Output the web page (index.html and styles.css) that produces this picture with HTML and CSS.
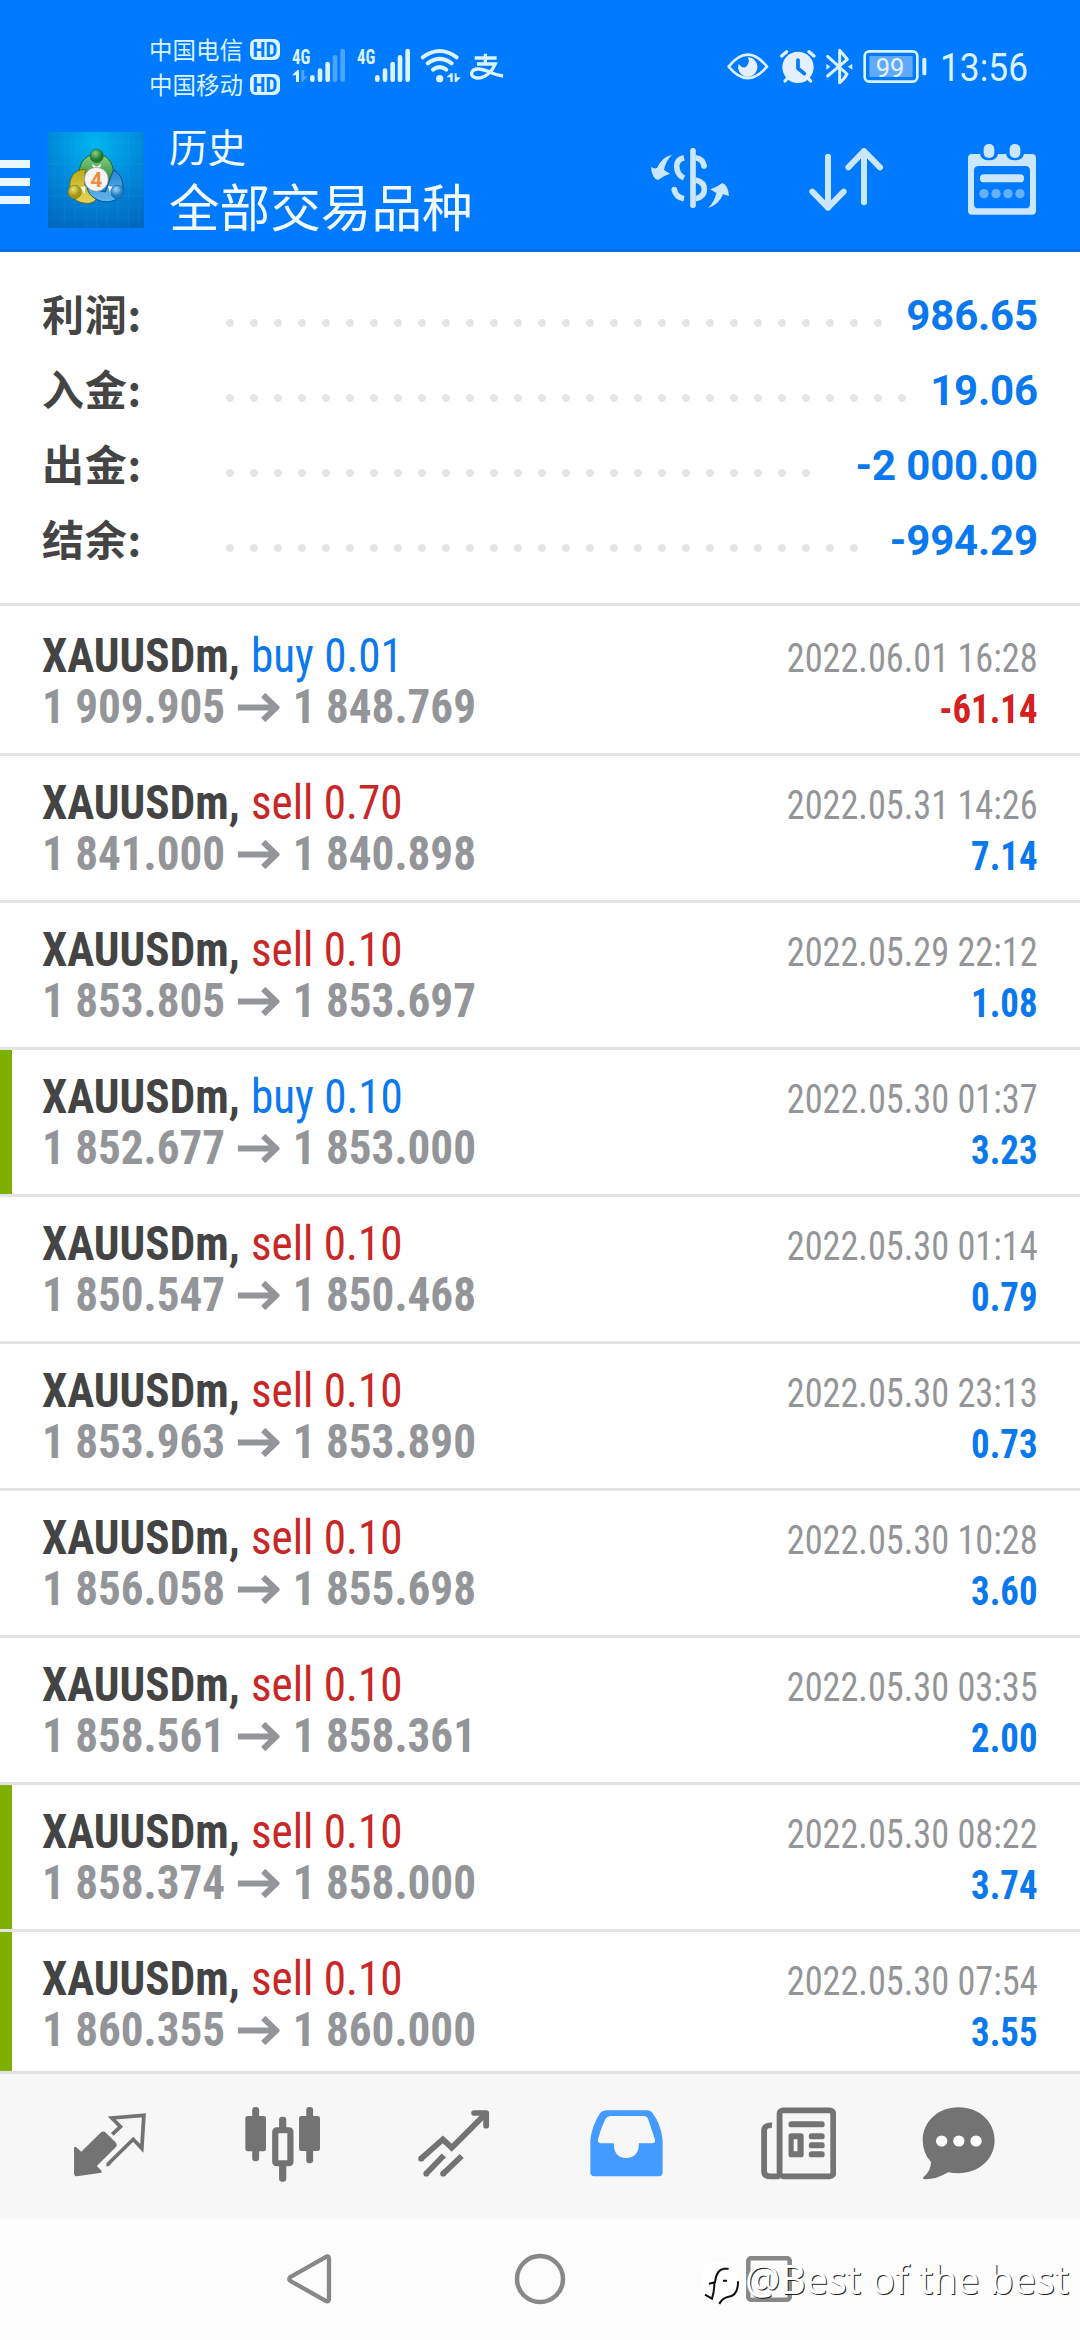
FILE: index.html
```
<!DOCTYPE html>
<html lang="zh-CN">
<head>
<meta charset="utf-8">
<title>历史</title>
<link rel="stylesheet" href="styles.css">
</head>
<body>
<header class="top">
  <div class="status">
    <div class="carriers">
      <div class="carrier">中国电信<span class="hd">HD</span></div>
      <div class="carrier">中国移动<span class="hd">HD</span></div>
    </div>
    <svg class="signals" viewBox="486 69 636 120" width="212" height="40">
      <g fill="#d9f3ff">
        <text x="486" y="131" class="net" textLength="55" lengthAdjust="spacingAndGlyphs">4G</text>
        <text x="681" y="131" class="net" textLength="55" lengthAdjust="spacingAndGlyphs">4G</text>
        <path d="M486 166 502 150H507V186H498V166Z"/>
        <path d="M514 150H523V169H533L517 186H514Z" opacity=".35"/>
      </g>
      <g stroke="#d9f3ff" stroke-width="14" stroke-linecap="round">
        <path d="M547 172V179M570 152V179M593 132V179"/>
        <path d="M615 112V179M638 93V179" opacity=".35"/>
        <path d="M742 172V179M765 152V179M788 132V179M810 112V179M833 93V179"/>
      </g>
      <g fill="none" stroke="#d9f3ff" stroke-width="12" stroke-linecap="round">
        <path d="M878 112Q929 74 980 112M893 130Q929 103 965 130M909 149Q929 134 949 149"/>
      </g>
      <circle cx="929" cy="176" r="11" fill="#d9f3ff"/>
      <path d="M949 172 963 160H968V186H961V172ZM974 160H980V172H993L979 186H974Z" fill="#d9f3ff"/>
      <path d="M1034 114H1100M1066 101V131M1041 132H1096C1088 152 1066 176 1040 174C1016 171 1022 147 1045 147C1070 147 1084 164 1119 168" fill="none" stroke="#d9f3ff" stroke-width="10"/>
    </svg>
    <svg class="indicators" viewBox="80 84 600 111" width="200" height="37">
      <path d="M85 140Q142 68 200 140Q142 209 85 140Z" fill="none" stroke="#dcf0ff" stroke-width="8" stroke-linejoin="round"/>
      <path d="M142 112A29 29 0 1 1 115 131Q128 149 139 139Q150 126 142 112Z" fill="#e4f0ff"/>
      <circle cx="293" cy="142" r="47" fill="#e4f0ff"/>
      <path d="M244 108 259 95M341 108 326 95M254 183 262 174M331 183 323 174" stroke="#e4f0ff" stroke-width="10" stroke-linecap="round"/>
      <path d="M293 120V145L312 161" fill="none" stroke="#007aff" stroke-width="11" stroke-linecap="round"/>
      <path d="M382 109 440 162Q430 180 418 188V91L441 118 382 168" fill="none" stroke="#d9f3ff" stroke-width="9" stroke-linejoin="round" stroke-linecap="round"/>
      <path d="M378 131 390 140 378 149ZM456 131 443 140 456 149Z" fill="#d9f3ff"/>
      <rect x="493" y="94" width="158" height="91" rx="14" fill="none" stroke="#d9f3ff" stroke-width="8"/>
      <rect x="507" y="108" width="130" height="63" rx="3" fill="#5fa9ff"/>
      <rect x="666" y="113" width="12" height="53" rx="5" fill="#d9f3ff"/>
      <text x="526" y="170" class="battery" textLength="86" lengthAdjust="spacingAndGlyphs" fill="#e4f3ff">99</text>
    </svg>
    <span class="clock">13:56</span>
  </div>
  <div class="appbar">
    <div class="menu"><i></i><i></i><i></i></div>
    <svg class="logo" viewBox="0 0 288 288" width="96" height="96">
      <defs>
        <radialGradient id="sky" cx=".5" cy=".12" r=".95"><stop offset="0" stop-color="#00b6ee"/><stop offset=".5" stop-color="#0089dc"/><stop offset="1" stop-color="#0067be"/></radialGradient>
        <linearGradient id="green" x2="0" y2="1"><stop offset="0" stop-color="#8fd08a"/><stop offset="1" stop-color="#1f8a2d"/></linearGradient>
        <linearGradient id="gold" x2="0" y2="1"><stop offset="0" stop-color="#b9ad1c"/><stop offset="1" stop-color="#e6d65a"/></linearGradient>
        <linearGradient id="blue" x2="0" y2="1"><stop offset="0" stop-color="#2a84cf"/><stop offset="1" stop-color="#62b8ee"/></linearGradient>
        <radialGradient id="gball" cx=".4" cy=".3"><stop offset="0" stop-color="#8ed084"/><stop offset="1" stop-color="#1d7a2a"/></radialGradient>
        <radialGradient id="yball" cx=".4" cy=".3"><stop offset="0" stop-color="#f0e478"/><stop offset="1" stop-color="#a39412"/></radialGradient>
        <radialGradient id="bball" cx=".4" cy=".3"><stop offset="0" stop-color="#9ad6f8"/><stop offset="1" stop-color="#1c78c0"/></radialGradient>
      </defs>
      <rect width="288" height="288" fill="url(#sky)"/>
      <path d="M18 0V288M50 0V288M82 0V288M114 0V288M146 0V288M178 0V288M210 0V288M242 0V288M274 0V288M0 32H288M0 64H288M0 96H288M0 128H288M0 160H288M0 192H288M0 224H288M0 256H288" stroke="#4fc0f5" stroke-opacity=".16" stroke-width="2"/>
      <path d="M94 120C94 88 118 66 146 66C176 66 196 92 197 124L176 152 112 126Z" fill="url(#green)" stroke="#176b2b" stroke-width="3"/>
      <path d="M112 112C76 112 62 142 66 168C66 196 88 214 118 214C132 214 144 206 146 198L110 160Z" fill="url(#gold)" stroke="#756c12" stroke-width="3"/>
      <path d="M196 114C220 124 230 156 222 182C212 208 176 216 150 204C134 196 120 186 118 168L172 180Z" fill="url(#blue)" stroke="#10508f" stroke-width="3"/>
      <path d="M132 96 146 104 160 96 152 118H140ZM98 166 112 162 110 186ZM180 162 194 164 188 190Z" fill="#f4faf2"/>
      <circle cx="146" cy="72" r="20" fill="url(#gball)" stroke="#2a6d32" stroke-width="2"/>
      <circle cx="80" cy="180" r="20" fill="url(#yball)" stroke="#857a18" stroke-width="2"/>
      <circle cx="208" cy="180" r="20" fill="url(#bball)" stroke="#1a5f9f" stroke-width="2"/>
      <circle cx="145" cy="142" r="36" fill="#f5f5f5" stroke="#888" stroke-width="2"/>
      <text x="145" y="165" class="four" text-anchor="middle">4</text>
    </svg>
    <div class="titles"><div class="title">历史</div><div class="subtitle">全部交易品种</div></div>
    <svg class="act-dollar" viewBox="93 84 234 180" width="78" height="60">
      <path d="M93 140Q103 148 111 144Q124 112 156 104Q137 123 132 150L150 161Q133 166 114 180Q95 174 93 140Z" fill="#cbe6ff"/>
      <path d="M327 228Q316 225 309 223Q297 254 264 264Q284 245 289 219L271 208Q288 203 307 189Q324 194 327 228Z" fill="#cbe6ff"/>
      <g fill="none" stroke="#cbe6ff" stroke-width="17">
        <path d="M219 92V256" stroke-linecap="round"/>
        <path d="M192 113Q170 118 170 139Q171 165 192 174M163 209Q167 231 192 236"/>
        <path d="M227 113Q250 117 252 139M227 180Q253 186 253 208Q253 231 227 236" />
      </g>
      <circle cx="163" cy="209" r="8.500" fill="#cbe6ff"/><circle cx="252" cy="138" r="8.500" fill="#cbe6ff"/>
    </svg>
    <svg class="act-sort" viewBox="567 84 222 189" width="74" height="63">
      <path d="M624 110V263M577 215 624 263 671 215M732 247V93M685 142 732 93 780 142" fill="none" stroke="#cbe6ff" stroke-width="18" stroke-linecap="round" stroke-linejoin="round"/>
    </svg>
    <svg class="act-cal" viewBox="1044 71 204 213" width="68" height="71">
      <path fill="#cbe6ff" fill-rule="evenodd" d="M1056 101H1080Q1084 120 1107 120Q1130 120 1134 101H1158Q1162 120 1185 120Q1208 120 1212 101H1236Q1248 101 1248 113V271Q1248 283 1236 283H1056Q1044 283 1044 271V113Q1044 101 1056 101ZM1076 137Q1062 137 1062 151V250Q1062 264 1076 264H1216Q1230 264 1230 250V151Q1230 137 1216 137Z"/>
      <rect x="1086" y="66" width="42" height="52" rx="20" fill="#007aff"/><rect x="1164" y="66" width="42" height="52" rx="20" fill="#007aff"/>
      <rect x="1091" y="71" width="32" height="42" rx="15" fill="#cbe6ff"/><rect x="1169" y="71" width="32" height="42" rx="15" fill="#cbe6ff"/>
      <rect x="1080" y="162" width="132" height="24" rx="11" fill="#cbe6ff"/>
      <g fill="#66b0ff"><circle cx="1092" cy="220" r="14"/><circle cx="1128" cy="220" r="14"/><circle cx="1164" cy="220" r="14"/><circle cx="1200" cy="220" r="14"/></g>
    </svg>
  </div>
</header>

<section class="summary">
  <div class="sum"><span class="label">利润:</span><span class="dots" style="width:672px"></span><b>986.65</b></div>
  <div class="sum"><span class="label">入金:</span><span class="dots" style="width:696px"></span><b>19.06</b></div>
  <div class="sum"><span class="label">出金:</span><span class="dots" style="width:600px"></span><b>-2 000.00</b></div>
  <div class="sum"><span class="label">结余:</span><span class="dots" style="width:648px"></span><b>-994.29</b></div>
</section>

<svg class="defs" width="0" height="0"><symbol id="arrow" viewBox="0 0 42 29" preserveAspectRatio="none"><path d="M0 14.500H38M25.500 2 38.500 14.500 25.500 27" fill="none" stroke="#939598" stroke-width="6"/></symbol></svg>

<main class="deals">
  <div class="deal"><div class="left"><div class="line"><b>XAUUSDm,</b><span class="buy">buy 0.01</span></div><div class="line price"><span>1 909.905</span><svg><use href="#arrow"/></svg><span>1 848.769</span></div></div><div class="right"><div class="date">2022.06.01 16:28</div><div class="profit loss">-61.14</div></div></div>
  <div class="deal"><div class="left"><div class="line"><b>XAUUSDm,</b><span class="sell">sell 0.70</span></div><div class="line price"><span>1 841.000</span><svg><use href="#arrow"/></svg><span>1 840.898</span></div></div><div class="right"><div class="date">2022.05.31 14:26</div><div class="profit">7.14</div></div></div>
  <div class="deal"><div class="left"><div class="line"><b>XAUUSDm,</b><span class="sell">sell 0.10</span></div><div class="line price"><span>1 853.805</span><svg><use href="#arrow"/></svg><span>1 853.697</span></div></div><div class="right"><div class="date">2022.05.29 22:12</div><div class="profit">1.08</div></div></div>
  <div class="deal tp"><div class="left"><div class="line"><b>XAUUSDm,</b><span class="buy">buy 0.10</span></div><div class="line price"><span>1 852.677</span><svg><use href="#arrow"/></svg><span>1 853.000</span></div></div><div class="right"><div class="date">2022.05.30 01:37</div><div class="profit">3.23</div></div></div>
  <div class="deal"><div class="left"><div class="line"><b>XAUUSDm,</b><span class="sell">sell 0.10</span></div><div class="line price"><span>1 850.547</span><svg><use href="#arrow"/></svg><span>1 850.468</span></div></div><div class="right"><div class="date">2022.05.30 01:14</div><div class="profit">0.79</div></div></div>
  <div class="deal"><div class="left"><div class="line"><b>XAUUSDm,</b><span class="sell">sell 0.10</span></div><div class="line price"><span>1 853.963</span><svg><use href="#arrow"/></svg><span>1 853.890</span></div></div><div class="right"><div class="date">2022.05.30 23:13</div><div class="profit">0.73</div></div></div>
  <div class="deal"><div class="left"><div class="line"><b>XAUUSDm,</b><span class="sell">sell 0.10</span></div><div class="line price"><span>1 856.058</span><svg><use href="#arrow"/></svg><span>1 855.698</span></div></div><div class="right"><div class="date">2022.05.30 10:28</div><div class="profit">3.60</div></div></div>
  <div class="deal"><div class="left"><div class="line"><b>XAUUSDm,</b><span class="sell">sell 0.10</span></div><div class="line price"><span>1 858.561</span><svg><use href="#arrow"/></svg><span>1 858.361</span></div></div><div class="right"><div class="date">2022.05.30 03:35</div><div class="profit">2.00</div></div></div>
  <div class="deal tp"><div class="left"><div class="line"><b>XAUUSDm,</b><span class="sell">sell 0.10</span></div><div class="line price"><span>1 858.374</span><svg><use href="#arrow"/></svg><span>1 858.000</span></div></div><div class="right"><div class="date">2022.05.30 08:22</div><div class="profit">3.74</div></div></div>
  <div class="deal tp"><div class="left"><div class="line"><b>XAUUSDm,</b><span class="sell">sell 0.10</span></div><div class="line price"><span>1 860.355</span><svg><use href="#arrow"/></svg><span>1 860.000</span></div></div><div class="right"><div class="date">2022.05.30 07:54</div><div class="profit">3.55</div></div></div>
</main>

<nav class="tabs">
  <svg viewBox="212 167 218 228" preserveAspectRatio="none" width="75" height="76">
    <path d="M221 290 236 304 292 247Q299 240 306 246L337 277Q342 284 337 290L281 347 295 361V367L223 378Q215 377 215 370V291Z" fill="#737373"/>
    <path d="M326 252 350 229 325 203 418 195 412 294 387 267 319 336Q315 343 309 343" fill="none" stroke="#737373" stroke-width="11"/>
  </svg>
  <svg viewBox="708 167 218 228" preserveAspectRatio="none" width="75" height="76">
    <g fill="#737373"><rect x="729" y="170" width="20" height="163" rx="9"/><rect x="709" y="197" width="60" height="106" rx="7"/><rect x="886" y="170" width="20" height="169" rx="9"/><rect x="865" y="197" width="61" height="105" rx="7"/><rect x="807" y="199" width="21" height="40" rx="9"/><rect x="807" y="340" width="21" height="54" rx="9"/></g>
    <rect x="796" y="240" width="44" height="99" rx="4" fill="#f7f7f7" stroke="#737373" stroke-width="18"/>
  </svg>
  <svg viewBox="1210 167 218 228" preserveAspectRatio="none" width="75" height="76">
    <g fill="none" stroke="#737373" stroke-width="17"><path d="M1222 325 1285 267 1311 292 1408 192" /><path d="M1376 188H1411V226" stroke-linecap="round" stroke-linejoin="round"/><path d="M1237 370 1288 315M1286 370 1340 317"/></g>
    <g fill="#737373"><circle cx="1222" cy="325" r="8.500"/><circle cx="1237" cy="370" r="8.500"/><circle cx="1286" cy="370" r="8.500"/></g>
  </svg>
  <svg viewBox="142 167 218 228" preserveAspectRatio="none" width="75" height="76">
    <path fill="#449bff" fill-rule="evenodd" d="M194 180H310Q322 180 327 189Q351 222 356 268V366Q356 378 344 378H158Q146 378 146 366V268Q151 225 174 189Q181 180 194 180ZM205 197Q195 197 190 205Q175 236 168 268Q167 278 177 279H214Q214 323 250 323Q287 323 287 279H325Q335 279 334 269L314 207Q310 197 300 197Z"/>
  </svg>
  <svg viewBox="645 167 218 228" preserveAspectRatio="none" width="75" height="76">
    <g fill="none" stroke="#737373" stroke-width="17"><rect x="699" y="180" width="156" height="198" rx="10"/><path d="M677 225Q654 223 654 242V362Q654 378 672 378H699"/></g>
    <g fill="#737373"><rect x="725" y="213" width="105" height="18" rx="8"/><path fill-rule="evenodd" d="M733 249H761Q769 249 769 257V313Q769 321 761 321H733Q725 321 725 313V257Q725 249 733 249ZM740 267V303H751V267Z"/><rect x="784" y="249" width="46" height="18" rx="8"/><rect x="784" y="276" width="46" height="18" rx="8"/><rect x="784" y="303" width="46" height="18" rx="8"/></g>
  </svg>
  <svg viewBox="1104 167 218 228" preserveAspectRatio="none" width="75" height="76">
    <path fill="#737373" d="M1213 171C1274 171 1318 215 1318 270C1318 328 1270 369 1213 369Q1197 369 1183 366Q1150 387 1116 387Q1106 385 1112 379Q1133 362 1133 335Q1109 309 1109 270C1109 215 1153 171 1213 171Z"/>
    <g fill="#fff"><circle cx="1164" cy="272" r="16.500"/><circle cx="1214" cy="272" r="16.500"/><circle cx="1264" cy="272" r="16.500"/></g>
  </svg>
</nav>

<footer class="softkeys">
  <svg width="46" height="52" viewBox="0 0 46 52"><path d="M41 3.500Q43 3 43 6V46Q43 49 40 48L4.500 28Q2 26 4.500 24L40 4Z" fill="none" stroke="#888" stroke-width="4.300"/></svg>
  <svg width="52" height="52" viewBox="0 0 52 52"><circle cx="26" cy="26" r="23" fill="none" stroke="#888" stroke-width="4.500"/></svg>
  <svg width="46" height="46" viewBox="0 0 46 46"><rect x="2.300" y="2.300" width="41.400" height="41.400" rx="2.500" fill="none" stroke="#888" stroke-width="4.500"/></svg>
  <div class="mark">
    <svg width="40" height="44" viewBox="20 33 120 132">
      <rect x="22" y="37" width="108" height="106" rx="38" fill="#fff"/>
      <path d="M44 101L62 97Q66 58 90 56H103M86 92H98M60 100Q60 124 53 146L32 134M131 94Q132 138 100 141Q84 144 75 162" fill="none" stroke="#111" stroke-width="6"/>
    </svg>
    <span>@Best of the best</span>
  </div>
</footer>
</body>
</html>
```
FILE: styles.css
```
* { box-sizing: border-box; }
body {
  margin: 0;
  width: 1080px;
  height: 2340px;
  overflow: hidden;
  display: flex;
  flex-direction: column;
  background: #fff;
  font-family: Roboto, "Noto Sans CJK SC", sans-serif;
}
svg { display: block; flex: none; }
.defs { position: absolute; }

.top { height: 252px; background: #007aff; border-bottom: 3px solid #0c6fdb; flex: none; }
.status { height: 110px; display: flex; align-items: flex-start; padding-left: 149px; }
.carriers { width: 143px; padding-top: 32px; flex: none; }
.carrier { display: flex; align-items: center; height: 35px; font: 23.5px/35px "Noto Sans CJK SC", sans-serif; color: #d9f3ff; }
.hd {
  width: 30px; height: 21px; margin-left: 7px; border-radius: 6px;
  background: #d9f3ff; color: #007aff;
  font: 700 21px/22px "Roboto Condensed", Roboto, sans-serif; text-align: center;
}
.net { font: 700 61px "Roboto Condensed", Roboto, sans-serif; }
.battery { font: 400 80px Roboto, sans-serif; }
.signals { margin-top: 43px; overflow: visible; }
.indicators { margin: 48px 0 0 223px; }
.clock { margin: 46px 0 0 13px; font: 400 38px/44px Roboto, sans-serif; color: #d9f3ff; transform: scaleX(.93); transform-origin: 0 0; }

.appbar { height: 139px; display: flex; align-items: flex-start; }
.menu { width: 30px; padding-top: 50px; display: flex; flex-direction: column; gap: 10px; flex: none; }
.menu i { height: 8px; background: #e8f6ff; }
.logo { margin: 22px 0 0 18px; }
.four { font: 700 62px Roboto, sans-serif; fill: #f08a3c; }
.titles { margin-left: 25px; width: 482px; color: #f2faff; font-family: "Noto Sans CJK SC", sans-serif; }
.title { font-size: 38.5px; line-height: 58px; margin-top: 6px; }
.subtitle { font-size: 50.6px; line-height: 62px; }
.act-dollar { margin-top: 38px; }
.act-sort { margin: 38px 0 0 80px; }
.act-cal { margin: 34px 0 0 85px; }

.summary { height: 354px; padding: 22px 42px 0; border-bottom: 3px solid #e4e4e4; flex: none; }
.sum { height: 75px; display: flex; align-items: baseline; line-height: 75px; }
.label { width: 176px; flex: none; font: 700 42px/75px "Noto Sans CJK SC", sans-serif; letter-spacing: .8px; color: #444; position: relative; top: 1px; }
.dots {
  height: 24px; flex: none; align-self: center; position: relative; top: 11px;
  background: radial-gradient(circle at 12px 12px, #e4e4e4 3.5px, transparent 4.2px) 0 0 / 24px 24px;
}
.sum b { margin-left: auto; font-size: 42px; letter-spacing: -.15px; color: #0a78ee; }

.deals { height: 1465px; overflow: hidden; flex: none; font-family: "Roboto Condensed", Roboto, sans-serif; font-stretch: 75%; }
.deal { height: 147px; padding: 21px 42px 0; border-bottom: 3px solid #e4e4e4; display: flex; justify-content: space-between; position: relative; }
.deal:first-child { height: 150px; padding-top: 24px; }
.tp::before { content: ""; position: absolute; left: 0; top: 0; width: 12px; height: 144px; background: #7fb000; }
.line { display: flex; height: 51px; font-size: 48px; line-height: 51px; white-space: nowrap; transform: scaleX(.94); transform-origin: 0 0; }
.line b { color: #444; margin-right: 12px; }
.buy { color: #0a78ee; }
.sell { color: #c92626; }
.price { font-weight: 700; color: #939598; }
.price svg { width: 45px; height: 29px; margin: 12px 14px 0 13px; }
.right { padding-top: 3px; text-align: right; font-size: 40px; line-height: 51px; white-space: nowrap; }
.right div { transform: scaleX(.92); transform-origin: 100% 0; }
.right .date { color: #939598; transform: scaleX(.907); }
.profit { font-weight: 700; color: #0a78ee; }
.right .loss { color: #d32020; }

.tabs { height: 147px; padding-left: 24px; background: #f7f7f7; border-top: 3px solid #e2e2e2; display: grid; grid-template-columns: repeat(5, 172px) 148px; justify-items: center; padding-top: 32px; flex: none; }

.softkeys { height: 122px; background: #fcfcfc; display: flex; align-items: center; padding-left: 286px; position: relative; flex: none; }
.softkeys > svg:nth-of-type(2) { margin-left: 182px; }
.softkeys > svg:nth-of-type(3) { margin-left: 180px; }
.mark { position: absolute; left: 701px; top: 43px; display: flex; }
.mark span { margin: -4px 0 0 4px; font: 39.3px/44px "Noto Sans", sans-serif; color: #fff; white-space: nowrap; text-shadow: 1px 1px 0 #222; }
```
